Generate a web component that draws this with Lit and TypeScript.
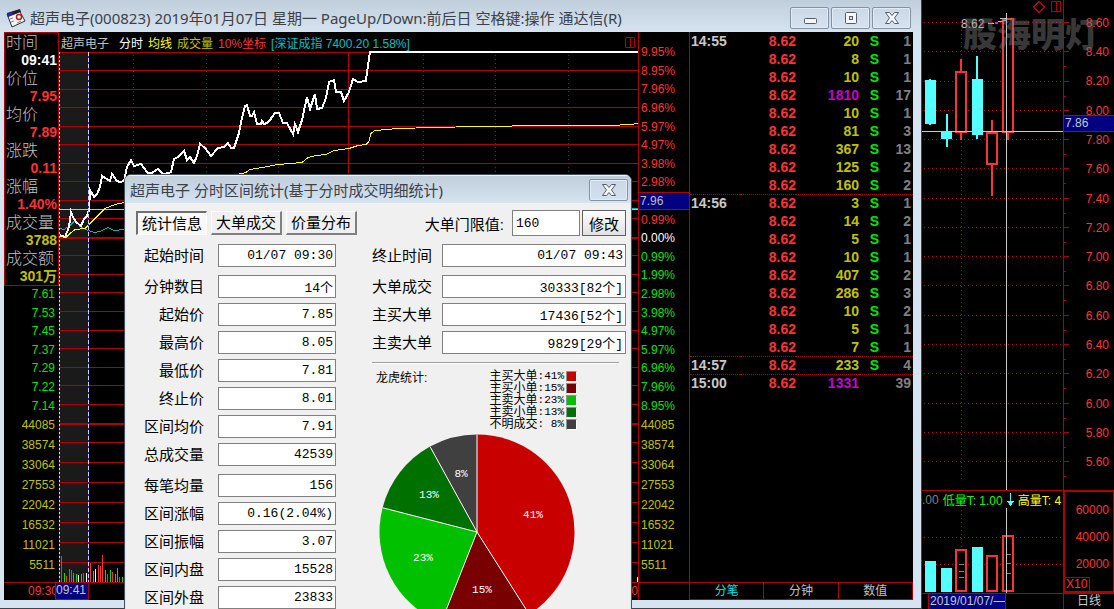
import { LitElement, html, svg, css } from "lit";
import { customElement, property } from "lit/decorators.js";
import { classMap } from "lit/directives/class-map.js";

type Tick = { time?: string; price: string; vol: number; side: string; count: number };

const readings = [
  ["时间", "09:41", "white"],
  ["价位", "7.95", "up"],
  ["均价", "7.89", "up"],
  ["涨跌", "0.11", "up"],
  ["涨幅", "1.40%", "up"],
  ["成交量", "3788", "vol"],
  ["成交额", "301万", "vol"],
];

const priceLabels = ["", "", "", "", "", "", "", "", "", "", "", "", "", "7.61", "7.53", "7.45", "7.37", "7.29", "7.22", "7.14"];
const percentLabels = [
  "9.95%", "8.95%", "7.96%", "6.96%", "5.97%", "4.97%", "3.98%", "2.98%", "7.96", "0.99%",
  "0.00%", "0.99%", "1.99%", "2.98%", "3.98%", "4.97%", "5.97%", "6.96%", "7.96%", "8.95%",
];
const volumeLabels = ["44085", "38574", "33064", "27553", "22042", "16532", "11021", "5511"];

const tickRows: Array<[string, number, string, number]> = [
  ["14:55", 20, "S", 1], ["", 8, "S", 1], ["", 10, "S", 1], ["", 1810, "S", 17], ["", 10, "S", 1],
  ["", 81, "S", 3], ["", 367, "S", 13], ["", 125, "S", 2], ["", 160, "S", 2],
  ["14:56", 3, "S", 1], ["", 14, "S", 2], ["", 5, "S", 1], ["", 10, "S", 1], ["", 407, "S", 2],
  ["", 286, "S", 3], ["", 10, "S", 2], ["", 5, "S", 1], ["", 7, "S", 1],
  ["14:57", 233, "S", 4], ["15:00", 1331, "", 39],
];
const ticks: Tick[] = tickRows.map(([time, vol, side, count]) => ({ time, price: "8.62", vol, side, count }));

const priceLine =
  "1,183 6,185 10,175 12,160 14,165 17,170 22,174 25,167 28,164 30,158 31,138 35,145 38,142 41,135 43,124 46,126 51,129 53,122 58,129 61,130 65,129 68,115 72,108 75,114 82,112 88,120 91,122 99,117 104,122 110,121 112,120 115,107 119,105 125,99 128,108 131,105 135,111 138,104 141,92 146,96 152,104 159,96 165,95 169,91 172,96 175,96 180,81 183,66 186,54 188,53 191,64 193,64 195,60 198,72 202,72 203,69 205,72 208,71 211,68 213,65 216,61 220,61 224,71 228,71 234,82 236,72 239,80 243,68 248,45 251,57 256,42 258,57 263,56 267,46 270,30 275,28 277,40 282,40 285,49 290,40 294,27 299,30 307,29 308,20 311,0 579,0";
const averageLine =
  "1,184 7,185 11,181 16,177 26,176 31,171 39,163 46,156 56,152 65,150 100,140 187,120 191,117 203,115 219,112 243,110 249,105 257,103 267,102 275,98 290,96 299,93 307,92 310,89 312,81 316,78 339,76 375,75 419,74 489,73 551,73 571,72 579,71";
const indexLine = "1,176 5,177 11,173 16,168 21,174 27,177 35,180 41,179 49,175 55,178 65,177 300,170 579,156";

const volumeBars: Array<[number, number, string]> = [
  [61, 556, "r"], [64, 573, "g"], [66, 576, "r"], [69, 569, "r"], [71, 570, "r"], [73, 573, "g"], [76, 574, "g"],
  [78, 575, "w"], [81, 574, "g"], [83, 573, "r"], [86, 573, "w"], [90, 563, "r"], [93, 571, "g"], [95, 569, "w"],
  [98, 565, "r"], [100, 566, "r"], [102, 555, "r"], [105, 570, "g"], [107, 574, "r"], [110, 570, "g"],
  [112, 572, "r"], [115, 574, "g"], [117, 568, "g"], [119, 577, "r"], [122, 577, "g"], [637, 577, "w"],
];

@customElement("intraday-chart")
class IntradayChart extends LitElement {
  static styles = css`
    :host { display: block; min-width: 0; min-height: 0; }
    svg { display: block; width: 100%; height: 100%; shape-rendering: crispEdges; overflow: visible; }
    .grid { stroke: #b00000; fill: none; }
    .thick { stroke-width: 2; }
    .dots { stroke-dasharray: 1 3; }
    .avg { stroke: #ffff00; fill: none; }
    .idx { stroke: #00b8b8; fill: none; }
    .price { stroke: #ffffff; stroke-width: 2; fill: none; }
    .cursor { stroke: #c0c0c0; }
    .shade { fill: #1a1a1a; }
    .r { fill: #ff3232; }
    .g { fill: #00e600; }
    .w { fill: #ffffff; }
  `;
  render() {
    const rows = [18, 37, 55, 74, 92, 111, 129, 148, 166, 203, 222, 240, 259, 278, 296, 315, 333, 352, 390, 410, 430, 450, 470, 490, 510];
    return html`<svg viewBox="0 0 579 530" preserveAspectRatio="none" role="img" aria-label="分时走势">
      <rect class="shade" x="1" y="0" width="28" height="530"></rect>
      <path class="grid" d="M0 .5H579"></path>
      ${rows.map((y) => svg`<path class="grid" d="M1 ${y + 0.5}H579"/>`)}
      <path class="grid thick" d="M1 186H579M1 372H579"></path>
      ${[74, 147, 219, 364, 436, 509].map((x) => svg`<path class="grid dots" d="M${x + 0.5} 3V372"/>`)}
      <path class="grid" d="M289.5 0V530"></path>
      <path d="M.5 0V530" stroke="#b00000"></path>
      <path d="M.5 0V530" stroke="#ffff00" stroke-dasharray="2 2"></path>
      ${volumeBars.map(([x, y, c]) => svg`<rect class=${c} x=${x - 59} y=${y - 52} width="1" height=${582 - y}/>`)}
      <path class="cursor" d="M1 157.5H579"></path>
      <g transform="translate(0 .5)">
        <polyline class="idx" points=${indexLine}></polyline>
        <polyline class="avg" points=${averageLine}></polyline>
      </g>
      <polyline class="price" points=${priceLine}></polyline>
      <path d="M29.5 0V530" stroke="#2020c0"></path>
      <path d="M29.5 0V530" stroke="#d8d8d8" stroke-dasharray="4 2"></path>
    </svg>`;
  }
}

const slices = [
  { name: "主买大单", pct: 41, color: "#c80000", x: 154, y: 81 },
  { name: "主买小单", pct: 15, color: "#780000", x: 103, y: 156 },
  { name: "主卖大单", pct: 23, color: "#00c000", x: 44, y: 124 },
  { name: "主卖小单", pct: 13, color: "#007000", x: 50, y: 61 },
  { name: "不明成交", pct: 8, color: "#404040", x: 82, y: 40 },
];

@customElement("share-pie")
class SharePie extends LitElement {
  static styles = css`
    :host { display: block; }
    svg { display: block; width: 196px; height: 196px; }
    text { fill: #fff; font: 11px "Liberation Mono", monospace; text-anchor: middle; dominant-baseline: central; }
  `;
  render() {
    let sum = 0;
    const point = (p: number) => {
      const a = (p / 100) * Math.PI * 2;
      return `${(98 + 97.5 * Math.sin(a)).toFixed(2)} ${(98 - 97.5 * Math.cos(a)).toFixed(2)}`;
    };
    return html`<svg viewBox="0 0 196 196" role="img" aria-label="龙虎统计">
      ${slices.map((s) => {
        const from = point(sum);
        sum += s.pct;
        return svg`<path d="M98 98L${from}A97.5 97.5 0 0 1 ${point(sum)}Z" fill=${s.color}/>`;
      })}
      ${[0, 41, 56, 79, 92].map((p) => svg`<path d="M98 98L${point(p)}" stroke="#fff"/>`)}
      ${slices.map((s) => svg`<text x=${s.x} y=${s.y}>${s.pct}%</text>`)}
    </svg>`;
  }
}

const cross = svg`<path d="M2.500 1.500H6.500L9 4.500 11.500 1.500H15.500L11.500 7 15.500 12.500H11.500L9 9.500 6.500 12.500H2.500L6.500 7Z" fill="#f6f6f6" stroke="#525d6e" stroke-linejoin="round"/>`;

const groups: Array<Array<[string, string]>> = [
  [["起始时间", "01/07 09:30"]],
  [["分钟数目", "14个"], ["起始价", "7.85"], ["最高价", "8.05"], ["最低价", "7.81"], ["终止价", "8.01"], ["区间均价", "7.91"], ["总成交量", "42539"]],
  [["每笔均量", "156"], ["区间涨幅", "0.16(2.04%)"], ["区间振幅", "3.07"], ["区间内盘", "15528"], ["区间外盘", "23833"]],
];
const rightGroups: Array<Array<[string, string]>> = [
  [["终止时间", "01/07 09:43"]],
  [["大单成交", "30333[82个]"], ["主买大单", "17436[52个]"], ["主卖大单", "9829[29个]"]],
];

@customElement("stats-dialog")
class StatsDialog extends LitElement {
  static styles = css`
    :host {
      display: block; box-sizing: border-box; background: #f0f0f0;
      border: 1px solid #46505c; border-radius: 7px 7px 0 0; overflow: hidden;
      font: 15px "Liberation Sans", "Noto Sans CJK SC", sans-serif; color: #000;
    }
    .title {
      display: flex; align-items: center; justify-content: space-between; height: 28px;
      padding: 0 3px 0 5px; background: linear-gradient(#c0cddb, #d6e4f2); border-top: 1px solid #eef4fa;
      color: #3c4248; font-family: "Noto Sans", "Noto Sans CJK SC", sans-serif; font-size: 15px; box-sizing: border-box;
    }
    h2 { margin: 0; font-size: 15px; line-height: 24px; font-weight: 400; white-space: nowrap; }
    .close {
      width: 39px; height: 22px; padding: 0; display: grid; place-items: center; border: 1px solid #8392a8;
      border-radius: 2px; background: linear-gradient(#cbd7e4, #d3e0ee); box-shadow: inset 0 0 0 1px #e2eaf3;
    }
    .close svg { width: 18px; height: 14px; }
    .body { padding: 6px 4px 20px 10px; border: solid #dce8f4; border-width: 0 1px; }
    .bar { display: flex; align-items: center; height: 28px; }
    .tabs { display: flex; gap: 4px; }
    button.tab, .modify {
      font: inherit; color: #000; padding: 0; border: 1px solid #fff; border-right: 2px solid #808080;
      border-bottom: 2px solid #808080; background: #f0f0f0; white-space: nowrap;
    }
    button.tab { width: 71px; height: 24px; line-height: 20px; }
    button.tab.on { border: 1px solid #fff; border-left: 2px solid #707070; border-top: 2px solid #707070; background: #f8f8f8; }
    .limit { flex: 1; display: flex; justify-content: flex-end; align-items: center; gap: 2px; }
    .limit label { margin-right: 6px; white-space: nowrap; }
    input {
      box-sizing: border-box; margin: 0; border: 1px solid #808080; outline: 0; border-radius: 0; background: #fff;
      font: 13px "Liberation Mono", "Noto Sans CJK SC", monospace; color: #000;
    }
    .limit input { width: 68px; height: 26px; padding: 0 3px; }
    .modify { width: 44px; height: 26px; border: 1px solid #606060; background: linear-gradient(#fcfcfc, #e2e2e2); }
    .columns { display: grid; grid-template-columns: 200px minmax(0, 1fr); column-gap: 36px; padding-top: 7px; }
    .group { display: flex; flex-direction: column; gap: 5px; margin-bottom: 8px; }
    .field { display: flex; align-items: center; justify-content: flex-end; gap: 14px; height: 23px; }
    .right .field { gap: 10px; }
    .field label { line-height: 23px; white-space: nowrap; }
    .field input { width: 118px; height: 23px; padding: 0 2px; text-align: right; }
    .right .field input { width: auto; flex: 1; min-width: 0; }
    .rule { height: 1px; background: #a0a0a0; border-bottom: 1px solid #fff; margin: 0 7px 6px 0; }
    .summary { display: flex; justify-content: space-between; padding: 0 49px 0 4px; font-size: 12px; line-height: 16px; }
    .legend { margin: 0; padding: 0; list-style: none; }
    .legend li { display: flex; align-items: center; justify-content: flex-end; height: 12px; line-height: 12px; }
    .pct { font: 11px "Liberation Mono", monospace; white-space: pre; margin-right: 2px; }
    .swatch { box-sizing: border-box; width: 11px; height: 11px; border: 1px solid #909090; border-right-color: #fff; border-bottom-color: #fff; }
    share-pie { padding: 4px 0 0 7px; }
  `;
  private fields(list: Array<Array<[string, string]>>, prefix: string) {
    return list.map((g, i) => html`<div class="group">
      ${g.map(([label, value], j) => html`<div class="field">
        <label for="${prefix}${i}${j}">${label}</label>
        <input id="${prefix}${i}${j}" readonly .value=${value} />
      </div>`)}
    </div>`);
  }
  render() {
    return html`
      <div class="title">
        <h2>超声电子 分时区间统计(基于分时成交明细统计)</h2>
        <button class="close" aria-label="关闭"><svg viewBox="0 0 18 14">${cross}</svg></button>
      </div>
      <div class="body">
        <div class="bar">
          <div class="tabs">
            <button class="tab on">统计信息</button>
            <button class="tab">大单成交</button>
            <button class="tab">价量分布</button>
          </div>
          <div class="limit">
            <label for="limit">大单门限值:</label>
            <input id="limit" .value=${"160"} />
            <button class="modify">修改</button>
          </div>
        </div>
        <div class="columns">
          <div>${this.fields(groups, "l")}</div>
          <div class="right">
            ${this.fields(rightGroups, "r")}
            <div class="rule"></div>
            <div class="summary">
              <span>龙虎统计:</span>
              <ul class="legend">
                ${slices.map((s) => html`<li>
                  <span>${s.name}</span><span class="pct">:${String(s.pct).padStart(2, " ")}%</span>
                  <span class="swatch" style="background-color:${s.color}"></span>
                </li>`)}
              </ul>
            </div>
            <share-pie></share-pie>
          </div>
        </div>
      </div>`;
  }
}

const dailyLabels = ["8.60", "8.40", "8.20", "8.00", "7.80", "7.60", "7.40", "7.20", "7.00", "6.80", "6.60", "6.40", "6.20", "6.00", "5.80", "5.60"];
const dailyY = dailyLabels.map((_, i) => Math.round(22 + i * 29.27) + 0.5);

@customElement("daily-panel")
class DailyPanel extends LitElement {
  static styles = css`
    :host {
      display: grid; grid-template: minmax(0, 1fr) 103px 16px / minmax(0, 1fr) 51px; position: relative;
      background: #000; color: #ff3232; font: 12px "Liberation Sans", "Noto Sans CJK SC", sans-serif; overflow: hidden;
    }
    svg { display: block; width: 100%; height: 100%; shape-rendering: crispEdges; }
    .plot, .vplot { min-width: 0; min-height: 0; }
    .vplot { border-top: 1px solid #b00000; display: flex; flex-direction: column; box-sizing: border-box; }
    .vplot > svg { flex: 1; min-height: 0; }
    .legend { display: flex; align-items: center; height: 17px; white-space: nowrap; color: #ffff00; overflow: hidden; gap: 4px; }
    .legend svg { width: 7px; height: 15px; flex: none; }
    .gray { color: #808080; }
    .low { color: #00ff00; }
    .side { display: grid; grid-template-columns: 6px minmax(0, 1fr); border-left: 1px solid #b00000; min-height: 0; }
    .labels {
      padding: 8px 5px 13px 0; display: grid;
      grid-template-rows: repeat(16, minmax(0, 1fr)); align-items: center; text-align: right; line-height: 14px;
    }
    .vaxis { border: 2px solid #b00000; border-right-width: 1px; display: flex; flex-direction: column; box-sizing: border-box; padding-top: 11px; }
    .vaxis span { text-align: right; padding-right: 4px; line-height: 14px; height: 27px; }
    .vaxis .last { flex: 1; height: auto; min-height: 0; }
    .vaxis .unit { align-self: flex-start; height: 14px; padding: 0 2px 0 1px; border: solid #b00000; border-width: 1px 1px 0 0; box-sizing: border-box; line-height: 13px; }
    .dates { border-top: 1px solid #b00000; padding-left: 6px; }
    .date { display: block; width: 78px; box-sizing: border-box; border: solid #b00000; border-width: 0 1px; background: #000080; color: #c8c8c8; line-height: 15px; padding-left: 1px; white-space: nowrap; overflow: hidden; }
    .period { border: solid #b00000; border-width: 1px 0 0 1px; color: #c8c8c8; text-align: center; line-height: 15px; }
    .mark { position: absolute; right: 0; top: 115px; width: 51px; height: 17px; box-sizing: border-box; border: solid #b00000; border-width: 1px 0 1px 1px; background: #000080; color: #c8c8c8; line-height: 14px; padding-left: 1px; }
    .watermark { position: absolute; left: 41px; top: 13px; font-size: 34px; line-height: 44px; font-weight: 900; color: rgba(128, 128, 128, 0.45); white-space: nowrap; }
    .peak { position: absolute; left: 39px; top: 17px; color: #c8c8c8; line-height: 15px; }
    .tools { position: absolute; right: 53px; top: 1px; width: 28px; height: 12px; }
    .dot { stroke: #b00000; stroke-dasharray: 1 3; fill: none; }
    .tick { stroke: #b00000; fill: none; }
    .up { fill: #000; stroke: #ff3232; stroke-width: 2; }
    .wick { stroke: #ff3232; stroke-width: 2; }
    .down { fill: #54ffff; stroke: none; }
    .cross { stroke: #c8c8c8; fill: none; }
    .gr { stroke: #808080; }
  `;
  render() {
    return html`
      <div class="plot"><svg viewBox="0 0 141 490" preserveAspectRatio="none" role="img" aria-label="日线">
        ${dailyY.map((y) => svg`<path class="dot" d="M2 ${y}H141"/>`)}
        <path class="dot" d="M39.500 22V480"></path>
        <path class="down" d="M3 80H14V124H3ZM7 79H9V125H7ZM19 132H30V139H19ZM24 114H26V147H24ZM50 79H61V135H50ZM54 56H56V139H54Z"></path>
        <path class="wick" d="M39 59V72M39 133V140M70 120V133M70 165V196M86 133V140"></path>
        <path class="up" d="M34 72H44V132H34ZM65 133H75V164H65ZM81 19H91V132H81Z"></path>
        <path class="cross" d="M84.500 13V490M0 131.500H141"></path>
        <path class="cross" d="M66 23.500H72M73 22.500L84 20.500M78 18.500H84V22"></path>
        <path d="M73 22H76V24H73Z" fill="#ff00ff"></path>
      </svg></div>
      <div class="side">
        <svg viewBox="0 0 6 490" preserveAspectRatio="none" aria-hidden="true">
          ${dailyY.map((y) => svg`<path class="tick" d="M0 ${y}H5M0 ${y + 15}H2"/>`)}
        </svg>
        <div class="labels">${dailyLabels.map((l) => html`<span>${l}</span>`)}</div>
      </div>
      <div class="vplot">
        <div class="legend"><span class="gray">.00</span><span class="low">低量T: 1.00</span>
          <svg viewBox="0 0 7 15"><path d="M3.500 1V11" stroke="#54ffff"></path><path d="M0 9H7L3.500 14Z" fill="#54ffff"></path></svg>
          <span>高量T: 4</span></div>
        <svg viewBox="0 0 141 85" preserveAspectRatio="none" role="img" aria-label="成交量">
          <path class="dot" d="M2 29.500H141M2 56.500H141M39.500 2V40"></path>
          <path class="down" d="M3 53H14V84H3ZM19 60H30V84H19ZM50 39H61V84H50Z"></path>
          <path class="up" d="M34 42H44V83H34ZM65 48H75V83H65ZM81 28H91V83H81Z"></path>
          <path class="cross" d="M84.500 0V85"></path>
          <path class="gr" d="M37 56.500H42M37 63.500H42M37 69.500H42M85 46.500H89M85 55.500H89M85 65.500H89"></path>
        </svg>
      </div>
      <div class="vaxis"><span>60000</span><span>40000</span><span class="last">20000</span><span class="unit">X10</span></div>
      <div class="dates"><span class="date">2019/01/07/—</span></div>
      <div class="period">日线</div>
      <span class="peak">8.62</span>
      <svg class="tools" viewBox="0 0 28 12"><path d="M6 .5L11.500 6 6 11.500 .5 6ZM18.500 .5H27.500V10.500H18.500ZM23.500 .5V10.500" fill="none" stroke="#b00000"></path></svg>
      <span class="watermark">股海明灯</span>
      <span class="mark">7.86</span>`;
  }
}

@customElement("app-root")
class AppRoot extends LitElement {
  @property() tab = "分笔";

  static styles = css`
    :host { display: block; font: 12px "Liberation Sans", "Noto Sans CJK SC", sans-serif; color: #c0c0c0; }
    .desktop { position: relative; display: grid; grid-template-columns: minmax(0, 1fr) 192px; height: 100vh; overflow: hidden; background: #000; }
    .window { display: flex; flex-direction: column; min-width: 0; min-height: 0; box-sizing: border-box; padding: 0 8px 8px 4px; background: #d6e4f2; border: solid #3c4450; border-width: 0 1px 1px 0; }
    .title { display: flex; align-items: center; height: 32px; margin: 0 -8px 0 -4px; padding: 3px 10px 0 6px; box-sizing: border-box; background: linear-gradient(#c0cddb, #d6e4f2); color: #3c4248; }
    h1 { flex: 1; margin: 0 0 0 4px; font: 400 15px "Noto Sans", "Noto Sans CJK SC", sans-serif; line-height: 26px; white-space: nowrap; }
    .logo { width: 20px; height: 20px; flex: none; }
    .controls { display: flex; gap: 2px; }
    .controls button { width: 39px; height: 22px; padding: 0; display: grid; place-items: center; border: 1px solid #8392a8; border-radius: 2px; background: linear-gradient(#cbd7e4, #d6e3f0); box-shadow: inset 0 0 0 1px #e2eaf3; }
    .controls svg { width: 18px; height: 14px; }
    .body { flex: 1; min-height: 0; display: grid; grid-template: minmax(0, 1fr) 18px / 55px minmax(0, 1fr) 51px 224px; background: #000; }
    .left { display: grid; min-height: 0; }
    .left > * { grid-area: 1 / 1; min-width: 0; }
    .axis { display: grid; grid-template-rows: repeat(20, minmax(0, 1fr)) repeat(8, 20px); padding: 11px 4px 7px; line-height: 18px; color: #00e600; align-items: center; }
    .left .axis { text-align: right; }
    .right { border-left: 1px solid #b00000; padding-left: 0; padding-right: 0; }
    .right span { padding-left: 2px; }
    .axis .pos { color: #ff3232; }
    .axis .zero { color: #fff; }
    .axis .vol { color: #c0c000; }
    .axis .mark { align-self: stretch; line-height: 16px; background: #000080; border: solid #b00000; border-width: 1px 0; color: #c0c0c0; padding-left: 1px; }
    .readings { margin: 0; align-self: start; border: 1px solid #b00000; background: #000; font-size: 16px; line-height: 20px; overflow: hidden; }
    .readings dt { padding-left: 1px; height: 18px; font-weight: 300; white-space: nowrap; }
    .readings dd { margin: 0; height: 18px; line-height: 18px; padding-right: 1px; text-align: right; font-size: 14px; font-weight: 700; }
    .white { color: #fff; }
    .up { color: #ff3232; }
    .vol { color: #c0c000; }
    .chart { display: flex; flex-direction: column; min-width: 0; min-height: 0; }
    .chart header { display: flex; align-items: center; gap: 5px; height: 20px; padding: 0 2px; white-space: nowrap; overflow: hidden; }
    .name { margin-right: 5px; }
    .avg { color: #ffff00; }
    .index { color: #00c0c0; flex: 1; }
    .box { width: 11px; height: 11px; }
    intraday-chart { flex: 1; }
    .ticks { border-left: 1px solid #b00000; min-height: 0; overflow: hidden; }
    table { width: 100%; border-collapse: separate; border-spacing: 0; table-layout: fixed; font-size: 14px; font-weight: 700; line-height: 18px; }
    td { padding: 0; text-align: right; }
    .time { text-align: left; padding-left: 1px; color: #c8c8c8; }
    .c1 { width: 50px; } .c2 { width: 56px; } .c3 { width: 63px; } .c4 { width: 26px; }
    .side { color: #00e600; padding-right: 6px; }
    .count { color: #808080; padding-right: 2px; }
    .big { color: #c800c8; }
    .sep td { border-top: 1px dotted #b00000; line-height: 17px; }
    .foot { border-top: 1px solid #b00000; box-sizing: border-box; line-height: 17px; }
    .start { text-align: right; color: #ff3232; padding-right: 1px; }
    .span { position: relative; display: flex; justify-content: flex-end; color: #ff3232; overflow: visible; }
    .cursor { position: absolute; left: -4px; top: 0; width: 34px; height: 17px; box-sizing: border-box; line-height: 15px; background: #000080; color: #c8c8c8; border: 1px solid #b00000; border-top: 0; white-space: nowrap; }
    .corner { border-left: 1px solid #b00000; }
    .modes { display: grid; grid-template-columns: repeat(3, minmax(0, 1fr)); border-bottom: 1px solid #b00000; border-right: 1px solid #b00000; }
    .modes button { font: inherit; color: #c0c0c0; background: none; border: 0; border-left: 1px solid #b00000; padding: 0; line-height: 16px; }
    .modes button.on { color: #00e0e0; }
    stats-dialog { position: absolute; left: 124px; top: 174px; width: 508px; }
  `;

  render() {
    return html`<div class="desktop">
      <main class="window">
        <div class="title">
          <svg class="logo" viewBox="0 0 20 20">
            <path d="M1 6L13 2 19 13 6 19Z" fill="#f4f4f4" stroke="#303030"></path>
            <path d="M1 5L14 1 15 4 2 9Z" fill="#202028"></path><path d="M1 6L6 4 7 6 2 9Z" fill="#2828c0"></path>
            <circle cx="13" cy="9" r="2.500" fill="#fff" stroke="#b02020" stroke-width="1.500"></circle>
            <path d="M4 11L7 10M5 14L8 13M11 15L15 13" stroke="#808080"></path>
          </svg>
          <h1>超声电子(000823) 2019年01月07日 星期一 PageUp/Down:前后日 空格键:操作 通达信(R)</h1>
          <div class="controls">
            <button aria-label="最小化"><svg viewBox="0 0 18 14"><rect x="3.500" y="7.500" width="12" height="5" rx="1" fill="#f6f6f6" stroke="#525d6e"></rect></svg></button>
            <button aria-label="最大化"><svg viewBox="0 0 18 14"><rect x="3.500" y="1.500" width="11" height="11" rx="1" fill="#f6f6f6" stroke="#525d6e"></rect><rect x="7.500" y="5.500" width="3" height="3" fill="#d6e4f2" stroke="#525d6e"></rect></svg></button>
            <button aria-label="关闭"><svg viewBox="0 0 18 14">${cross}</svg></button>
          </div>
        </div>
        <div class="body">
          <div class="left">
            <div class="axis">
              ${priceLabels.map((l) => html`<span>${l}</span>`)}
              ${volumeLabels.map((l) => html`<span class="vol">${l}</span>`)}
            </div>
            <dl class="readings">
              ${readings.map(([k, v, c]) => html`<dt>${k}</dt><dd class=${c}>${v}</dd>`)}
            </dl>
          </div>
          <div class="chart">
            <header>
              <span class="name">超声电子</span><span class="white">分时</span><span class="avg">均线</span>
              <span class="vol">成交量</span><span class="up">10%坐标</span><span class="index">[深证成指 7400.20 1.58%]</span>
              <svg class="box" viewBox="0 0 11 11"><path d="M.5 .5H9.500V10.500H.5ZM5.500 .5V10.500" fill="none" stroke="#b00000"></path></svg>
            </header>
            <intraday-chart></intraday-chart>
          </div>
          <div class="axis right">
            ${percentLabels.map((l, i) => html`<span class=${classMap({ pos: i < 10 && i !== 8, zero: i === 10, mark: i === 8 })}>${l}</span>`)}
            ${volumeLabels.map((l) => html`<span class="vol">${l}</span>`)}
          </div>
          <div class="ticks">
            <table>
              <colgroup><col class="c1" /><col class="c2" /><col class="c3" /><col class="c4" /><col /></colgroup>
              <tbody>
                ${ticks.map((t, i) => html`<tr class=${classMap({ sep: i > 0 && !!t.time })}>
                  <td class="time">${t.time}</td><td class="up">${t.price}</td>
                  <td class=${t.vol > 1000 ? "big" : "vol"}>${t.vol}</td>
                  <td class="side">${t.side}</td><td class="count">${t.count}</td>
                </tr>`)}
              </tbody>
            </table>
          </div>
          <div class="foot start">09:30</div>
          <div class="foot span"><span>15:00</span><span class="cursor">09:41</span></div>
          <div class="foot corner"></div>
          <div class="foot modes">
            ${["分笔", "分钟", "数值"].map((m) => html`<button class=${classMap({ on: m === this.tab })} @click=${() => (this.tab = m)}>${m}</button>`)}
          </div>
        </div>
      </main>
      <daily-panel></daily-panel>
      <stats-dialog></stats-dialog>
    </div>`;
  }
}
